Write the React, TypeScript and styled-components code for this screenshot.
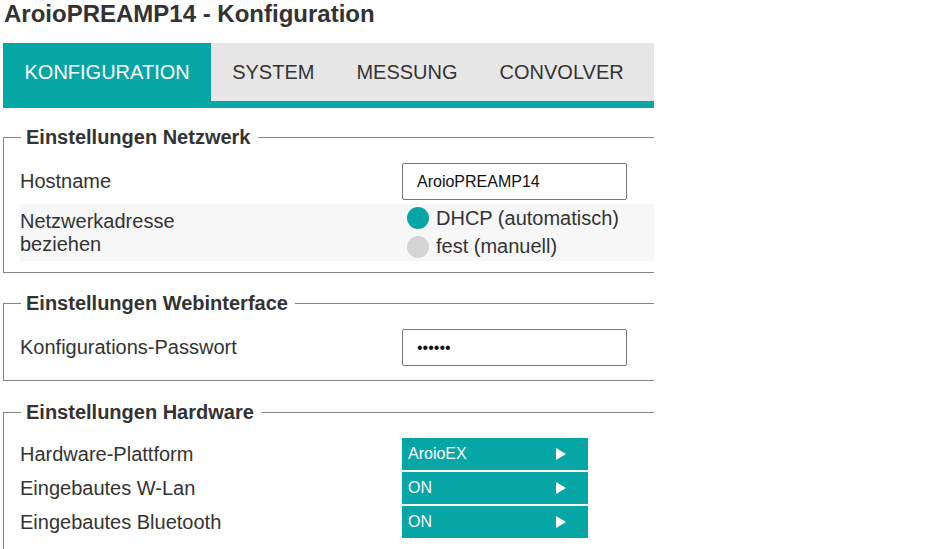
import React from "react";
import styled, { createGlobalStyle } from "styled-components";

const TEAL = "#07a6a6";
const FONT = `"Liberation Sans", Arial, sans-serif`;

const Global = createGlobalStyle`
  html, body { margin: 0; padding: 0; background: #fff; }
  body { font-family: ${FONT}; color: #333; }
  * { box-sizing: border-box; }
`;

const Page = styled.div`
  width: 654px;
  padding-left: 3px;
`;

const Title = styled.h1`
  margin: 0 0 15px;
  padding-left: 1px;
  font: bold 24px/28px ${FONT};
  color: #333;
`;

const TabBar = styled.nav`
  display: flex;
  background: #e7e7e7;
  border-bottom: 7px solid ${TEAL};
`;

const Tab = styled.div<{ $active?: boolean }>`
  height: 58px;
  padding: 0 ${(p) => (p.$active ? 21.5 : 21)}px;
  display: flex;
  align-items: center;
  font: 20px/23px ${FONT};
  color: ${(p) => (p.$active ? "#fff" : "#333")};
  background: ${(p) => (p.$active ? TEAL : "transparent")};
`;

const Group = styled.fieldset<{ $pt: number; $pb: number; $mt: number }>`
  margin: ${(p) => p.$mt}px 0 0;
  padding: ${(p) => p.$pt}px 0 ${(p) => p.$pb}px 16px;
  border: 1px solid #878787;
  border-right: none;
  min-width: 0;
`;

const Legend = styled.legend`
  margin-left: 1px;
  padding: 0 7px 0 5px;
  font: bold 20px/23px ${FONT};
  color: #333;
`;

const Row = styled.div<{ $shaded?: boolean; $pad: number }>`
  display: grid;
  grid-template-columns: 382px 1fr;
  align-items: center;
  padding: ${(p) => p.$pad}px 0;
  background: ${(p) => (p.$shaded ? "#f7f7f7" : "transparent")};
`;

const Label = styled.div`
  font: 20px/23px ${FONT};
  color: #333;
  align-self: center;
`;

const TextInput = styled.input`
  width: 225px;
  height: 37px;
  border: 1px solid #767676;
  border-radius: 2px;
  padding: 0 14px;
  font: 16px ${FONT};
  color: #111;
  background: #fff;
  outline: none;
`;

const RadioGroup = styled.div`
  display: flex;
  flex-direction: column;
`;

const RadioItem = styled.div`
  height: 28.5px;
  display: flex;
  align-items: center;
  gap: 7px;
  padding-left: 5px;
  font: 20px/23px ${FONT};
  color: #333;
`;

const Dot = styled.span<{ $on?: boolean }>`
  width: 22px;
  height: 22px;
  border-radius: 50%;
  background: ${(p) => (p.$on ? TEAL : "#d4d4d4")};
  flex: none;
`;

const Select = styled.div`
  width: 186px;
  height: 32px;
  margin: 1px 0;
  padding: 0 22px 0 6px;
  display: flex;
  align-items: center;
  justify-content: space-between;
  background: ${TEAL};
  color: #fff;
  font: 16px/18px ${FONT};
`;

const Arrow = styled.span`
  width: 0;
  height: 0;
  border-left: 10px solid #fff;
  border-top: 6px solid transparent;
  border-bottom: 6px solid transparent;
`;

export default function App() {
  return (
    <>
      <Global />
      <Page>
        <Title>AroioPREAMP14 - Konfiguration</Title>
        <TabBar>
          <Tab $active>KONFIGURATION</Tab>
          <Tab>SYSTEM</Tab>
          <Tab>MESSUNG</Tab>
          <Tab>CONVOLVER</Tab>
        </TabBar>

        <Group $mt={18} $pt={10} $pb={11}>
          <Legend>Einstellungen Netzwerk</Legend>
          <Row $pad={4}>
            <Label>Hostname</Label>
            <TextInput type="text" defaultValue="AroioPREAMP14" />
          </Row>
          <Row $pad={0} $shaded>
            <Label>
              Netzwerkadresse
              <br />
              beziehen
            </Label>
            <RadioGroup>
              <RadioItem>
                <Dot $on />
                DHCP (automatisch)
              </RadioItem>
              <RadioItem>
                <Dot />
                fest (manuell)
              </RadioItem>
            </RadioGroup>
          </Row>
        </Group>

        <Group $mt={19} $pt={10} $pb={10}>
          <Legend>Einstellungen Webinterface</Legend>
          <Row $pad={4}>
            <Label>Konfigurations-Passwort</Label>
            <TextInput type="password" defaultValue="123456" />
          </Row>
        </Group>

        <Group $mt={20} $pt={13} $pb={20}>
          <Legend>Einstellungen Hardware</Legend>
          <Row $pad={0}>
            <Label>Hardware-Plattform</Label>
            <Select>
              AroioEX
              <Arrow />
            </Select>
          </Row>
          <Row $pad={0}>
            <Label>Eingebautes W-Lan</Label>
            <Select>
              ON
              <Arrow />
            </Select>
          </Row>
          <Row $pad={0}>
            <Label>Eingebautes Bluetooth</Label>
            <Select>
              ON
              <Arrow />
            </Select>
          </Row>
        </Group>
      </Page>
    </>
  );
}
